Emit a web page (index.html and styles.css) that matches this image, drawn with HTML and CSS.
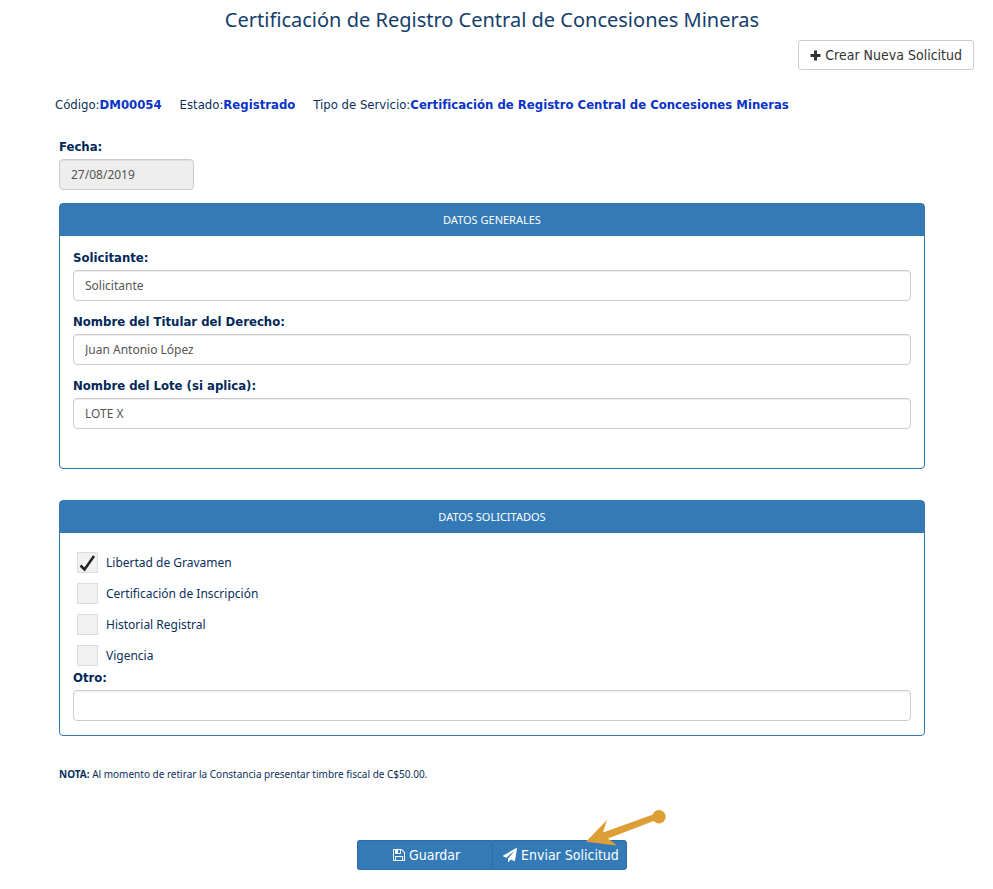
FILE: index.html
```html
<!DOCTYPE html>
<html lang="es">
<head>
<meta charset="utf-8">
<meta name="viewport" content="width=device-width, initial-scale=1">
<title>Certificación de Registro Central de Concesiones Mineras</title>
<link rel="stylesheet" href="styles.css">
</head>
<body>
<header class="page-header">
  <h1 class="page-title">Certificación de Registro Central de Concesiones Mineras</h1>
  <div class="toolbar">
    <button type="button" class="btn btn-default">
      <svg class="icon icon-plus" viewBox="0 0 11 11" aria-hidden="true"><path d="M4 .5h3V4h3.500v3H7v3.500H4V7H.5V4H4z"/></svg>
      <span>Crear Nueva Solicitud</span>
    </button>
  </div>
</header>
<main class="content">
  <div class="summary">
    <p>Código:<strong>DM00054</strong></p>
    <p>Estado:<strong>Registrado</strong></p>
    <p>Tipo de Servicio:<strong>Certificación de Registro Central de Concesiones Mineras</strong></p>
  </div>
  <form class="form">
    <div class="field field-date">
      <label for="fecha">Fecha:</label>
      <input id="fecha" type="text" value="27/08/2019" readonly>
    </div>
    <section class="panel panel-general">
      <h2 class="panel-title">DATOS GENERALES</h2>
      <div class="panel-body">
        <div class="field">
          <label for="solicitante">Solicitante:</label>
          <input id="solicitante" type="text" value="Solicitante">
        </div>
        <div class="field">
          <label for="titular">Nombre del Titular del Derecho:</label>
          <input id="titular" type="text" value="Juan Antonio López">
        </div>
        <div class="field">
          <label for="lote">Nombre del Lote (si aplica):</label>
          <input id="lote" type="text" value="LOTE X">
        </div>
      </div>
    </section>
    <section class="panel">
      <h2 class="panel-title">DATOS SOLICITADOS</h2>
      <div class="panel-body">
        <div class="checks">
          <label class="check"><input type="checkbox" checked><svg class="tick" viewBox="0 0 21 21" aria-hidden="true"><path d="M3.500 13.500 7.500 17.500 17 4"/></svg><span>Libertad de Gravamen</span></label>
          <label class="check"><input type="checkbox"><svg class="tick" viewBox="0 0 21 21" aria-hidden="true"><path d="M3.500 13.500 7.500 17.500 17 4"/></svg><span>Certificación de Inscripción</span></label>
          <label class="check"><input type="checkbox"><svg class="tick" viewBox="0 0 21 21" aria-hidden="true"><path d="M3.500 13.500 7.500 17.500 17 4"/></svg><span>Historial Registral</span></label>
          <label class="check"><input type="checkbox"><svg class="tick" viewBox="0 0 21 21" aria-hidden="true"><path d="M3.500 13.500 7.500 17.500 17 4"/></svg><span>Vigencia</span></label>
        </div>
        <div class="field">
          <label for="otro">Otro:</label>
          <input id="otro" type="text">
        </div>
      </div>
    </section>
    <p class="note"><strong>NOTA:</strong> Al momento de retirar la Constancia presentar timbre fiscal de C$50.00.</p>
    <div class="actions">
      <div class="btn-group">
        <button type="button" class="btn btn-primary">
          <svg class="icon icon-save" viewBox="0 0 1536 1536" aria-hidden="true"><path fill-rule="evenodd" d="M384 1408h768v-384H384zm896 0h128V512q0-14-10-38.500t-20-34.500l-281-281q-10-10-34-20t-39-10v416q0 40-28 68t-68 28H352q-40 0-68-28t-28-68V128H128v1280h128V992q0-40 28-68t68-28h832q40 0 68 28t28 68zM896 480V160q0-13-9.500-22.500T864 128H672q-13 0-22.500 9.500T640 160v320q0 13 9.500 22.500T672 512h192q13 0 22.500-9.500T896 480zm640 32v928q0 40-28 68t-68 28H96q-40 0-68-28t-28-68V96q0-40 28-68T96 0h928q40 0 88 20t76 48l280 280q28 28 48 76t20 88z"/></svg>
          <span>Guardar</span>
        </button>
        <button type="button" class="btn btn-primary">
          <svg class="icon icon-send" viewBox="0 0 1792 1792" aria-hidden="true"><path d="M1764 11q33 24 27 64l-256 1536q-5 29-32 45-14 8-31 8-11 0-24-5l-453-185-242 295q-18 23-49 23-13 0-22-4-19-7-30.500-23.500T640 1728v-349l864-1059-1069 925-395-162q-37-14-40-55-2-40 32-59L1696 9q15-9 32-9 20 0 36 11z"/></svg>
          <span>Enviar Solicitud</span>
        </button>
        <svg class="pointer" viewBox="0 0 82 36" aria-hidden="true"><path d="M0 31.700 21 10 17 22.500 67 4.500 69 10.500 22 28.500 31 35.500z"/><circle cx="73" cy="6.700" r="6.700"/></svg>
      </div>
    </div>
  </form>
</main>
</body>
</html>
```
FILE: styles.css
```css
* { box-sizing: border-box; }

body {
  margin: 0;
  padding: 0 9px 16px 0;
  background: #fff;
  color: #0b2f5b;
  font: 12px/20px "Noto Sans", sans-serif;
}

h1, h2, p { margin: 0; }

.page-header { padding: 4px 10px 0; }

.page-title {
  color: #143e6b;
  font: 400 20px/32px "Noto Sans", sans-serif;
  text-align: center;
}

.toolbar {
  display: flex;
  justify-content: flex-end;
  padding-top: 4px;
}

.btn {
  display: flex;
  align-items: center;
  justify-content: center;
  gap: 4px;
  height: 30px;
  padding: 0 11px;
  border: 1px solid #ccc;
  border-radius: 3px;
  background: #fff;
  color: #333;
  font: 14px/20px "DejaVu Sans Condensed", Verdana, sans-serif;
  white-space: nowrap;
}

.icon { flex: none; fill: currentColor; }
.icon-plus { width: 11px; height: 11px; }
.icon-save { width: 12px; height: 12px; }
.icon-send { width: 14px; height: 14px; }

.content { padding: 25px 59px 0; }

.summary {
  display: flex;
  gap: 18px;
  margin-left: -4px;
  font: 13px/20px "DejaVu Sans Condensed", Verdana, sans-serif;
  white-space: nowrap;
}

.summary strong { color: #0a33c8; }

.field label {
  display: block;
  color: #02285a;
  font: 700 13px/20px "DejaVu Sans Condensed", Verdana, sans-serif;
  padding-bottom: 2px;
}

.field input {
  display: block;
  width: 100%;
  height: 31px;
  padding: 0 11px;
  border: 1px solid #ccc;
  border-radius: 4px;
  background: #fff;
  box-shadow: inset 0 1px 1px rgba(0, 0, 0, .075);
  color: #555;
  font: 12px/20px "Noto Sans", sans-serif;
}

.field-date {
  width: 135px;
  margin: 22px 0 13px;
}

.field-date input { background: #eee; }

.panel {
  border: 1px solid #337ab7;
  border-radius: 4px;
}

.panel + .panel { margin-top: 31px; }

.panel-title {
  background: #337ab7;
  color: #fff;
  font: 400 11px/32px "Noto Sans", sans-serif;
  text-align: center;
}

.panel-body { padding: 12px 13px 14px; }
.panel-body .field + .field { margin-top: 11px; }
.panel-general .panel-body { padding-bottom: 39px; }

.checks {
  display: grid;
  gap: 10px;
  padding: 7px 4px 2px;
}

.check {
  position: relative;
  display: flex;
  align-items: center;
  gap: 8px;
}

.check input {
  appearance: none;
  width: 21px;
  height: 21px;
  margin: 0;
  border: 1px solid #ddd;
  background: #f1f1f1;
}

.tick {
  position: absolute;
  left: 0;
  width: 21px;
  height: 21px;
  fill: none;
  stroke: #222;
  stroke-width: 2.500;
  visibility: hidden;
}

.check input:checked + .tick { visibility: visible; }

.note {
  margin-top: 28px;
  font-size: 10px;
}

.actions {
  display: flex;
  justify-content: center;
  margin-top: 56px;
}

.btn-group {
  position: relative;
  display: grid;
  grid-template-columns: 1fr 1fr;
}

.btn-primary {
  padding: 0 7px 0 10px;
  border-color: #2e6da4;
  background: #337ab7;
  color: #fff;
}

.btn-primary:first-child { border-radius: 3px 0 0 3px; border-right: 0; }
.btn-primary:nth-child(2) { border-radius: 0 3px 3px 0; }

.pointer {
  position: absolute;
  top: -30px;
  right: -41px;
  width: 82px;
  height: 36px;
  fill: #dd9f35;
}
```
